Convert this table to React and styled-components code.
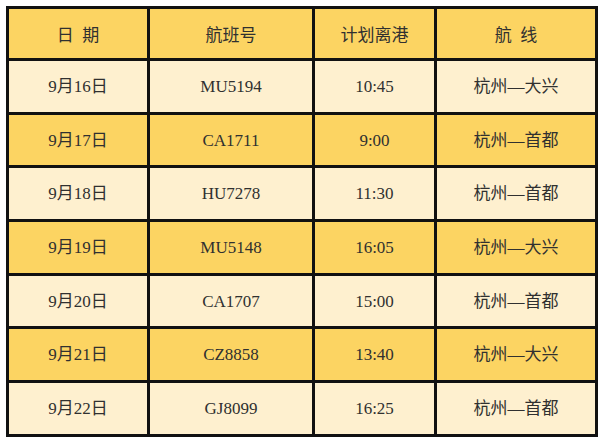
import React from "react";
import styled, { createGlobalStyle } from "styled-components";

const GlobalStyle = createGlobalStyle`
  html, body {
    margin: 0;
    padding: 0;
    background: #ffffff;
  }
  body {
    font-family: "Liberation Serif", "Noto Sans CJK SC", serif;
  }
`;

const flights = [
  { date: "9月16日", no: "MU5194", time: "10:45", route: "杭州—大兴" },
  { date: "9月17日", no: "CA1711", time: "9:00", route: "杭州—首都" },
  { date: "9月18日", no: "HU7278", time: "11:30", route: "杭州—首都" },
  { date: "9月19日", no: "MU5148", time: "16:05", route: "杭州—大兴" },
  { date: "9月20日", no: "CA1707", time: "15:00", route: "杭州—首都" },
  { date: "9月21日", no: "CZ8858", time: "13:40", route: "杭州—大兴" },
  { date: "9月22日", no: "GJ8099", time: "16:25", route: "杭州—首都" },
];

const colWidths = [141, 165, 122, 161];

const Page = styled.div`
  padding: 6px 0 0 6px;
`;

const Table = styled.table`
  border-collapse: collapse;
  table-layout: fixed;
  width: 589px;
  border: 3px solid #111;
  color: #303030;
  font-size: 17px;
`;

const HeadRow = styled.tr`
  height: 52px;
  background: #fcd462;
`;

const Row = styled.tr`
  height: 53.7px;
  background: ${(p) => (p.$dark ? "#fcd462" : "#fef0cf")};
`;

const Cell = styled.td`
  border: 3px solid #111;
  text-align: center;
  vertical-align: middle;
  padding: 0;
  line-height: 1;
`;

const HeadCell = styled(Cell).attrs({ as: "th" })`
  font-weight: normal;
  font-family: "Noto Sans CJK SC", sans-serif;
  font-size: 17px;
`;

export default function App() {
  return (
    <Page>
      <GlobalStyle />
      <Table>
        <colgroup>
          {colWidths.map((w, i) => (
            <col key={i} style={{ width: w }} />
          ))}
        </colgroup>
        <thead>
          <HeadRow>
            <HeadCell>日{"\u2002"}期</HeadCell>
            <HeadCell>航班号</HeadCell>
            <HeadCell>计划离港</HeadCell>
            <HeadCell>航{"\u2002"}线</HeadCell>
          </HeadRow>
        </thead>
        <tbody>
          {flights.map((f, i) => (
            <Row key={f.date} $dark={i % 2 === 1}>
              <Cell>{f.date}</Cell>
              <Cell>{f.no}</Cell>
              <Cell>{f.time}</Cell>
              <Cell>{f.route}</Cell>
            </Row>
          ))}
        </tbody>
      </Table>
    </Page>
  );
}
